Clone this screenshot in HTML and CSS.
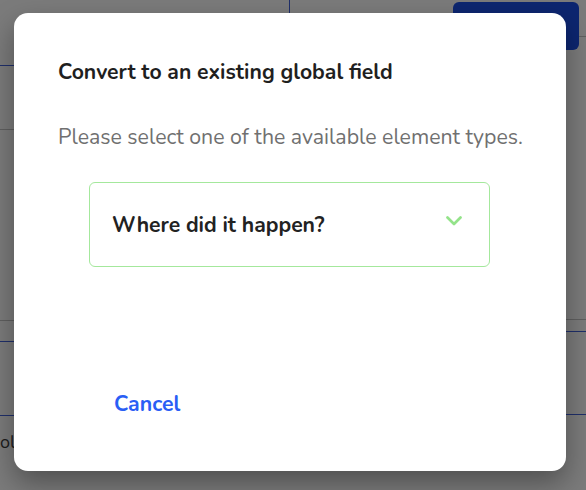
FILE: index.html
```html
<!DOCTYPE html>
<html lang="en">
<head>
    <meta charset="UTF-8">
    <meta name="viewport" content="width=device-width, initial-scale=1.0">
    <title>Convert to global field</title>
    <link rel="stylesheet" href="styles.css">
</head>
<body>
    <!-- page behind the dialog, already dimmed by the overlay -->
    <div class="backdrop">
        <div class="col col-left">
            <div class="row row-a"></div>
            <div class="row row-b"></div>
            <div class="row row-c"></div>
            <div class="row row-d"></div>
            <div class="row row-e"></div>
            <div class="row row-f"><span class="peek">ol</span></div>
        </div>
        <div class="col col-right">
            <div class="top-bar">
                <span class="primary-btn"></span>
            </div>
            <div class="row row-g"></div>
            <div class="row row-h"></div>
            <div class="row row-i"></div>
        </div>
    </div>

    <div class="modal">
        <h2 class="modal-title">Convert to an existing global field</h2>
        <p class="modal-text">Please select one of the available element types.</p>
        <div class="select">
            <span class="select-label">Where did it happen?</span>
            <svg class="chevron" width="16" height="10" viewBox="0 0 16 10">
                <path d="M1.5 1.5 L8 8 L14.5 1.5" fill="none" stroke="#94e38a" stroke-width="2.7" stroke-linecap="round" stroke-linejoin="round"/>
            </svg>
        </div>
        <div class="modal-actions">
            <button class="link-btn">Cancel</button>
        </div>
    </div>
</body>
</html>
```

FILE: styles.css
```css
/* Reset */
* {
    box-sizing: border-box;
    margin: 0;
    padding: 0;
}

body {
    font-family: 'Nunito', Lato, 'Open Sans', sans-serif;
    background-color: #7b7b7b;
    color: #222;
    width: 586px;
    height: 490px;
    overflow: hidden;
    position: relative;
}

/* Backdrop page */
.backdrop {
    display: grid;
    grid-template-columns: 289px 1fr;
    height: 490px;
}

.row {
    border-bottom: 1px solid #5f5f5f;
}

.row-a { height: 66px; border-bottom-color: #1f2f6a; }
.row-b { height: 64px; }
.row-c { height: 191px; }
.row-d { height: 21px; border-bottom-color: #1f2f6a; }
.row-e { height: 74px; border-bottom-color: #1f2f6a; }
.row-f {
    border-bottom: none;
    padding-top: 14px;
}

.peek {
    font-size: 18px;
    color: #1c1c1c;
}

.top-bar {
    height: 37px;
    border-left: 1px solid #1f2f6a;
    border-bottom: 1px solid #5f5f5f;
    display: flex;
    justify-content: flex-end;
    padding: 2px 7px 0 0;
}

.primary-btn {
    width: 126px;
    height: 48px;
    background-color: #0d2670;
    border-radius: 6px;
}

.row-g { height: 283px; }
.row-h { height: 12px; border-bottom-color: #1f2f6a; }
.row-i { height: 83px; border-bottom-color: #1f2f6a; }

/* Dialog */
.modal {
    position: absolute;
    top: 13px;
    left: 14px;
    width: 552px;
    height: 458px;
    background-color: #fff;
    border-radius: 14px;
    box-shadow: 0 12px 28px rgba(0, 0, 0, 0.35);
    padding: 46px 44px 0;
    display: flex;
    flex-direction: column;
}

.modal-title {
    font-size: 21.2px;
    font-weight: 700;
    color: #1f1f1f;
    line-height: 26px;
}

.modal-text {
    margin-top: 39px;
    font-size: 21.3px;
    color: #707070;
    line-height: 26px;
    white-space: nowrap;
}

.select {
    margin: 32px 32px 0 31px;
    height: 85px;
    border: 1px solid #a4e89c;
    border-radius: 6px;
    display: flex;
    align-items: center;
    justify-content: space-between;
    padding: 0 27px 0 22px;
}

.select-label {
    font-size: 21.2px;
    font-weight: 700;
    color: #222;
}

.chevron {
    margin-top: -8px;
}

.modal-actions {
    margin-top: 124px;
    padding-left: 56px;
}

.link-btn {
    background: none;
    border: none;
    font-family: inherit;
    font-size: 21.3px;
    line-height: 26px;
    font-weight: 700;
    color: #2a5ef5;
    cursor: pointer;
}
```
